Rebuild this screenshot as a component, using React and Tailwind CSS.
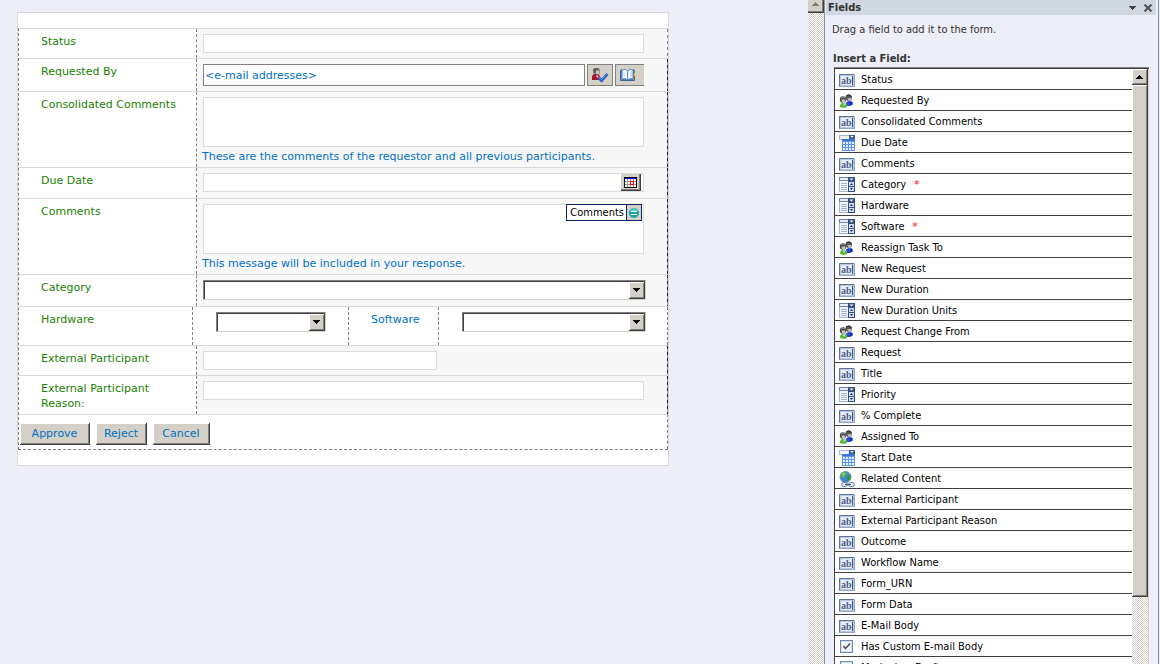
import React from 'react';

const fields = [
  { name: 'Status', type: 'text' },
  { name: 'Requested By', type: 'people' },
  { name: 'Consolidated Comments', type: 'text' },
  { name: 'Due Date', type: 'date' },
  { name: 'Comments', type: 'text' },
  { name: 'Category', type: 'choice', required: true },
  { name: 'Hardware', type: 'choice' },
  { name: 'Software', type: 'choice', required: true },
  { name: 'Reassign Task To', type: 'people' },
  { name: 'New Request', type: 'text' },
  { name: 'New Duration', type: 'text' },
  { name: 'New Duration Units', type: 'choice' },
  { name: 'Request Change From', type: 'people' },
  { name: 'Request', type: 'text' },
  { name: 'Title', type: 'text' },
  { name: 'Priority', type: 'choice' },
  { name: '% Complete', type: 'text' },
  { name: 'Assigned To', type: 'people' },
  { name: 'Start Date', type: 'date' },
  { name: 'Related Content', type: 'link' },
  { name: 'External Participant', type: 'text' },
  { name: 'External Participant Reason', type: 'text' },
  { name: 'Outcome', type: 'text' },
  { name: 'Workflow Name', type: 'text' },
  { name: 'Form_URN', type: 'text' },
  { name: 'Form Data', type: 'text' },
  { name: 'E-Mail Body', type: 'text' },
  { name: 'Has Custom E-mail Body', type: 'check' },
  { name: 'Marked as Draft', type: 'check' },
];

const TextIcon = () => (
  <svg width="16" height="16" viewBox="0 0 16 16" aria-hidden="true">
    <rect x="0" y="2" width="16" height="13" fill="#b9c6e4" />
    <rect x="2" y="4" width="12" height="9" fill="#e6ecf9" />
    <path d="M0.5 14.5V2.5H15" fill="none" stroke="#5d7299" />
    <path d="M1 14.5H15.5V3" fill="none" stroke="#93a5cf" />
    <text x="2" y="12" fontSize="10" fontWeight="bold" fontFamily="Liberation Serif, serif" fill="#4c6086">ab</text>
    <path d="M13.500 4V13" stroke="#3d5278" />
  </svg>
);

const PeopleIcon = () => (
  <svg width="16" height="16" viewBox="0 0 16 16" aria-hidden="true">
    <path d="M7 9.5Q10.500 6.500 13.500 9V11.500L11 13H8Z" fill="#2546d8" />
    <path d="M11 9L13.500 9.500V11.500L11.500 12.500Z" fill="#122a9c" />
    <circle cx="9.800" cy="4.800" r="3.200" fill="#555" />
    <path d="M8.500 5H12.500Q12.500 8.500 10.500 8.500Q8.500 8 8.500 5Z" fill="#b9b9b9" />
    <path d="M7 3Q9.500 0.500 12.500 3.500" fill="none" stroke="#303030" />
    <path d="M1 14Q0.800 10 4.500 9.500Q8.500 10 8 14L5 15Z" fill="#56b43e" />
    <path d="M3.500 10.500L5 13L6.500 10.500Z" fill="#c6f0b4" />
    <circle cx="4" cy="6.500" r="3.200" fill="#4a4a4a" />
    <path d="M2.500 6.500H6.500Q6.500 10 4.500 10Q2.500 9.500 2.500 6.500Z" fill="#c4c4c4" />
    <path d="M2 5Q4 3 6 5" fill="none" stroke="#929292" />
  </svg>
);

const DateIcon = () => (
  <svg width="16" height="16" viewBox="0 0 16 16" aria-hidden="true">
    <rect x="0.500" y="0.500" width="15" height="4" fill="#eef3fb" stroke="#a9b7d2" />
    <rect x="10" y="0" width="6" height="4" fill="#3d5a94" />
    <path d="M11.500 1H14.500L13 3Z" fill="#fff" />
    <rect x="3" y="4" width="13" height="12" fill="#5d93e8" />
    <rect x="3" y="4" width="13" height="2" fill="#3c76d6" />
    <path
      d="M4 7h2v2h-2zM7 7h2v2h-2zM10 7h2v2h-2zM13 7h2v2h-2zM4 10h2v2h-2zM7 10h2v2h-2zM10 10h2v2h-2zM13 10h2v2h-2zM4 13h2v2h-2zM7 13h2v2h-2zM10 13h2v2h-2zM13 13h2v2h-2z"
      fill="#e6f0ff"
    />
  </svg>
);

const ChoiceIcon = () => (
  <svg width="16" height="16" viewBox="0 0 16 16" aria-hidden="true">
    <rect x="0.500" y="1.500" width="10" height="13" fill="#f3f6fc" stroke="#a7b6d3" />
    <rect x="0" y="0" width="10" height="4" fill="#6f84ad" />
    <rect x="1" y="1" width="8" height="2" fill="#e8edf7" />
    <path d="M2 6.500H8M2 8.500H8M2 10.500H8M2 12.500H8" stroke="#a2b2d2" />
    <rect x="9" y="0" width="7" height="15" fill="#34507f" />
    <path d="M10.500 1.500H14.500L12.500 3.500Z" fill="#fff" />
    <rect x="10" y="5" width="5" height="4" fill="#d3dcef" />
    <rect x="10" y="10" width="5" height="4" fill="#d3dcef" />
    <path d="M11 8L12.500 6L14 8ZM11 11H14L12.500 13Z" fill="#1c2f55" />
  </svg>
);

const LinkIcon = () => (
  <svg width="16" height="16" viewBox="0 0 16 16" aria-hidden="true">
    <circle cx="6.500" cy="6" r="5.500" fill="#3d83d8" stroke="#6f98b8" />
    <path d="M3 2Q6 0 8 2L7 5L4 7L2 6Z" fill="#58b847" />
    <path d="M8 5L12 4L11 9L8 10Z" fill="#319636" />
    <path d="M3.500 3L5.500 2L5 4Z" fill="#d8f5cf" />
    <rect x="2.500" y="11.500" width="6" height="4" rx="2" fill="#dce6f2" stroke="#6b819e" />
    <rect x="9.500" y="11.500" width="6" height="4" rx="2" fill="#dce6f2" stroke="#6b819e" />
    <path d="M6 13.500H12" stroke="#40597c" />
  </svg>
);

const CheckIcon = () => (
  <svg width="16" height="16" viewBox="0 0 16 16" aria-hidden="true">
    <rect x="1.500" y="1.500" width="12" height="12" fill="#d5def3" stroke="#7387b3" />
    <rect x="3" y="3" width="9" height="9" fill="#f6f8ff" />
    <path d="M4.500 7L6.500 9.500L11 4.500" fill="none" stroke="#4a4a58" strokeWidth="1.500" />
  </svg>
);

const icons = {
  text: TextIcon,
  people: PeopleIcon,
  date: DateIcon,
  choice: ChoiceIcon,
  link: LinkIcon,
  check: CheckIcon,
};

const CheckNamesIcon = () => (
  <svg width="18" height="16" viewBox="0 0 18 16" aria-hidden="true">
    <rect x="2" y="1" width="7" height="7" rx="2" fill="#8d8d8d" />
    <path d="M2 2L5 1H8L5 4V6H3Z" fill="#5f5f5f" />
    <rect x="5" y="4" width="3" height="4" fill="#d2cfcf" />
    <path d="M1 13V9L3 7H7L9 9V13Z" fill="#a3182b" />
    <path d="M5 8L6 11L8 9Z" fill="#f1c9cd" />
    <path d="M7.500 10.500L10.500 13.500L16.500 7" fill="none" stroke="#2f62c4" strokeWidth="3" />
    <path d="M8 10.500L10.500 12.500L16 7" fill="none" stroke="#5c93ea" />
  </svg>
);

const AddressBookIcon = () => (
  <svg width="16" height="14" viewBox="0 0 16 14" aria-hidden="true">
    <path d="M0.500 2.500L2 1.500V11H13V1.500L14.500 2.500V12.500H0.500Z" fill="#6f9bd6" stroke="#39619d" />
    <path d="M2 2Q5 0 7.500 3V12Q5 9.500 2 11Z" fill="#fff" stroke="#5d86c2" />
    <path d="M7.500 3Q10 0 13 2V11Q10 9.500 7.500 12Z" fill="#f2f7ff" stroke="#5d86c2" />
    <path d="M4 4V9M10 4H12M10 6H12M10 8H12" stroke="#b0c8ec" />
    <rect x="14" y="2" width="1" height="3" fill="#3f9a57" />
    <rect x="14" y="5" width="1" height="3" fill="#e8b431" />
    <rect x="14" y="8" width="1" height="3" fill="#d1412d" />
  </svg>
);

const CalendarIcon = () => (
  <svg width="13" height="11" viewBox="0 0 13 11" aria-hidden="true">
    <rect x="0.500" y="0.500" width="12" height="10" fill="#fff" stroke="#000" />
    <rect x="1" y="1" width="11" height="1" fill="#00f" />
    <path d="M1 4.500H12M1 7.500H12M3.500 2V10M6.500 2V10M9.500 2V10" stroke="#999" />
    <rect x="6.500" y="4.500" width="3" height="3" fill="#fff" stroke="#f00" />
  </svg>
);

const CommentsTagIcon = () => (
  <svg width="12" height="12" viewBox="0 0 12 12" aria-hidden="true">
    <circle cx="6" cy="6" r="5" fill="#15a3a8" />
    <path d="M2 4Q3 1 6 1Q9 1 10 4Z" fill="#5cc8c8" />
    <path d="M3 4.500H9M3 7.500H9" stroke="#fff" />
  </svg>
);

const Arrow = ({ up = false, color = '#000' }) => (
  <svg width="7" height="4" viewBox="0 0 7 4" aria-hidden="true" shapeRendering="crispEdges">
    <path d={up ? 'M3 0h1v1h1v1h1v1h1v1H0V3h1V2h1V1h1z' : 'M0 0h7v1H6v1H5v1H4v1H3V3H2V2H1V1H0z'} fill={color} />
  </svg>
);

const inputClass = 'block h-[19px] border border-[#dcdcdc] bg-white px-1 text-[11px] outline-none';

const Label = ({ htmlFor, children }) => (
  <div className="w-[178px] shrink-0 border-r border-dashed border-[#808080] pt-[5px] pr-4 pl-[22px]">
    <label htmlFor={htmlFor} className="block text-[#218200]">{children}</label>
  </div>
);

const Row = ({ id, label, className, plainEdge, children }) => (
  <div className={`flex border-t border-[#d9d9d9] ${className || ''}`}>
    <Label htmlFor={id}>{label}</Label>
    <div className="min-w-0 flex-1 bg-[#f7f7f7] py-[5px] pr-[23px] pl-[6px]">{children}</div>
    {plainEdge ? (
      <div className="w-px bg-[repeating-linear-gradient(#808080_0_3px,#fff_3px_6px)]" />
    ) : (
      <div className="w-px bg-[repeating-linear-gradient(#0a246a_0_3px,#a09890_3px_6px)]" />
    )}
  </div>
);

const Select = ({ id }) => (
  <div className="relative h-5 border border-[#808080] border-r-[#d4d0c8] border-b-[#d4d0c8] bg-white">
    <select id={id} className="block h-[18px] w-full appearance-none border-t border-l border-[#404040] bg-white px-1 text-[11px] outline-none">
      <option></option>
    </select>
    <span className="pointer-events-none absolute top-px right-0 flex h-[17px] w-4 items-center justify-center border-r border-b border-[#404040] bg-[#d4d0c8] shadow-[inset_1px_1px_#fff,inset_-1px_-1px_#808080]">
      <Arrow />
    </span>
  </div>
);

const FormButton = ({ className, children }) => (
  <button
    type="button"
    className={`h-[22px] border-r border-b border-[#404040] bg-[#d4d0c8] text-center text-[#0072c6] shadow-[inset_1px_1px_#fff,inset_-1px_-1px_#808080] ${className}`}
  >
    {children}
  </button>
);

const TaskForm = () => (
  <form className="w-full max-w-[652px] border border-[#d9d9d9] bg-white pt-[15px] pb-[15px] text-[11px] leading-[15px] text-[#0072c6]">
    <div className="border-b border-l border-dashed border-[#808080]">
      <Row id="status" label="Status" plainEdge>
        <input id="status" className={`${inputClass} w-full`} />
      </Row>

      <Row id="requested-by" label="Requested By">
        <div className="flex">
          <input
            id="requested-by"
            defaultValue="<e-mail addresses>"
            className="h-[22px] min-w-0 flex-1 border border-[#808080] bg-white px-px outline-none"
          />
          <button type="button" aria-label="Check names" className="ml-[2px] flex h-[22px] w-[26px] items-center justify-center border border-[#808080] bg-[#d4d0c8]">
            <CheckNamesIcon />
          </button>
          <button type="button" aria-label="Address book" className="ml-[2px] flex h-[22px] w-[29px] items-center border border-r-0 border-[#808080] bg-[#d4d0c8] pl-1">
            <AddressBookIcon />
          </button>
        </div>
      </Row>

      <Row id="consolidated" label="Consolidated Comments" className="h-[76px]">
        <textarea id="consolidated" className="block h-[50px] w-full resize-none border border-[#dcdcdc] bg-white px-1 outline-none" />
        <p className="-ml-px pt-[2px]">
          These are the comments of the requestor and all previous participants.
        </p>
      </Row>

      <Row id="due-date" label="Due Date">
        <div className="mb-px flex h-[19px] border border-[#dcdcdc] bg-white">
          <input id="due-date" className="min-w-0 flex-1 bg-white px-1 outline-none" />
          <button type="button" aria-label="Pick a date" className="mr-[2px] flex h-[17px] w-5 items-center justify-center border-r border-b border-[#404040] bg-[#d4d0c8] shadow-[inset_-1px_-1px_#808080]">
            <CalendarIcon />
          </button>
        </div>
      </Row>

      <Row id="comments" label="Comments" className="h-[76px]">
        <div className="relative">
          <textarea id="comments" className="block h-[50px] w-full resize-none border border-[#dcdcdc] bg-white px-1 outline-none" />
          <div className="absolute top-0 right-[2px] flex h-[17px] border border-[#0a246a] bg-white font-['DejaVu_Sans_Condensed','DejaVu_Sans',sans-serif] text-black">
            <span className="pr-[2px] pl-[3px]">Comments</span>
            <span className="flex w-[15px] items-center justify-center border-l border-[#0a246a] bg-[#d4d0c8]">
              <CommentsTagIcon />
            </span>
          </div>
        </div>
        <p className="-ml-px pt-[2px]">This message will be included in your response.</p>
      </Row>

      <Row id="category" label="Category">
        <div className="-mr-[2px] mb-px">
          <Select id="category" />
        </div>
      </Row>

      <div className="flex h-[39px] border-t border-[#d9d9d9]">
        <div className="w-[174px] border-r border-dashed border-[#808080] pt-[5px] pl-[22px]">
          <label htmlFor="hardware" className="block text-[#218200]">Hardware</label>
        </div>
        <div className="w-[156px] border-r border-dashed border-[#808080] pt-[5px] pr-[22px] pl-[23px]">
          <Select id="hardware" />
        </div>
        <div className="w-[90px] border-r border-dashed border-[#808080] pt-[5px] pl-[22px]">
          <label htmlFor="software" className="block">Software</label>
        </div>
        <div className="flex-1 border-r border-dashed border-[#808080] pt-[5px] pr-[21px] pl-[23px]">
          <Select id="software" />
        </div>
      </div>

      <Row id="external" label="External Participant">
        <input id="external" className={`${inputClass} w-[234px]`} />
      </Row>

      <Row id="external-reason" label="External Participant Reason:" className="h-[39px]">
        <input id="external-reason" className={`${inputClass} w-full`} />
      </Row>

      <div className="flex gap-[6px] border-t border-r border-dashed border-[#808080] border-t-[#d9d9d9] pt-2 pb-1 pl-px [border-top-style:solid]">
        <FormButton className="w-[70px]">Approve</FormButton>
        <FormButton className="w-[51px]">Reject</FormButton>
        <FormButton className="w-[57px]">Cancel</FormButton>
      </div>
    </div>
  </form>
);

const FieldRow = ({ field }) => {
  const Icon = icons[field.type];
  return (
    <li className="flex h-[21px] items-center border-b border-[#404040] pt-px pl-1">
      <Icon />
      <span className="pl-[6px] whitespace-nowrap">{field.name}</span>
      {field.required && <span className="pl-2 text-[#f00]">*</span>}
    </li>
  );
};

const FieldsPane = () => (
  <aside className="flex h-full w-[336px] shrink-0 flex-col border-l border-[#8c8f96] pr-px font-['DejaVu_Sans_Condensed','DejaVu_Sans',sans-serif] text-[11px] leading-[15px] text-[#333]">
    <div className="flex min-h-0 flex-1 flex-col border-r border-[#8c8f96]">
      <header className="mr-[2px] ml-px flex h-[15px] items-center bg-[#cfd8e0] pr-1 pl-[2px]">
        <h2 className="flex-1 font-bold">Fields</h2>
        <button type="button" aria-label="Pane options" className="mr-2"><Arrow color="#404040" /></button>
        <button type="button" aria-label="Close">
          <svg width="8" height="8" viewBox="0 0 8 8" aria-hidden="true">
            <path d="M0.500 0.500L7.500 7.500M7.500 0.500L0.500 7.500" stroke="#505050" strokeWidth="2" />
          </svg>
        </button>
      </header>
      <p className="pt-[7px] pl-[7px]">Drag a field to add it to the form.</p>
      <h3 className="pt-[14px] pl-2 font-bold">Insert a Field:</h3>
      <div className="mt-[2px] mr-[9px] ml-[9px] flex min-h-0 flex-1 border-t border-l border-[#404040] bg-white shadow-[0_-1px_#808080]">
        <ul className="min-w-0 flex-1 overflow-hidden text-black">
          {fields.map((field) => <FieldRow key={field.name} field={field} />)}
        </ul>
        <div className="flex w-[17px] flex-col border-r border-[#d4d0c8] bg-[repeating-conic-gradient(#d4d0c8_0_25%,#fff_0_50%)] bg-[length:2px_2px]">
          <button type="button" aria-label="Scroll up" className="flex h-4 shrink-0 items-center justify-center border-r border-b border-[#404040] bg-[#d4d0c8] shadow-[inset_1px_1px_#fff,inset_-1px_-1px_#808080]">
            <Arrow up />
          </button>
          <div className="h-[86%] border-r border-b border-[#404040] bg-[#d4d0c8] shadow-[inset_1px_1px_#fff,inset_-1px_-1px_#808080]" />
        </div>
      </div>
    </div>
  </aside>
);

export default function App() {
  return (
    <div className="flex h-screen overflow-hidden bg-[#eeeef8] font-['DejaVu_Sans',sans-serif]">
      <main className="min-w-0 flex-1 overflow-hidden pt-3 pl-[17px]">
        <TaskForm />
      </main>
      <div className="w-4 shrink-0 bg-[repeating-conic-gradient(#d4d0c8_0_25%,#fff_0_50%)] bg-[length:2px_2px]">
        <button type="button" aria-label="Scroll up" className="flex h-[13px] w-full items-center justify-center border-r border-b border-[#404040] bg-[#d4d0c8] pb-1 shadow-[inset_-1px_-1px_#808080]">
          <Arrow up color="#808080" />
        </button>
      </div>
      <FieldsPane />
    </div>
  );
}
